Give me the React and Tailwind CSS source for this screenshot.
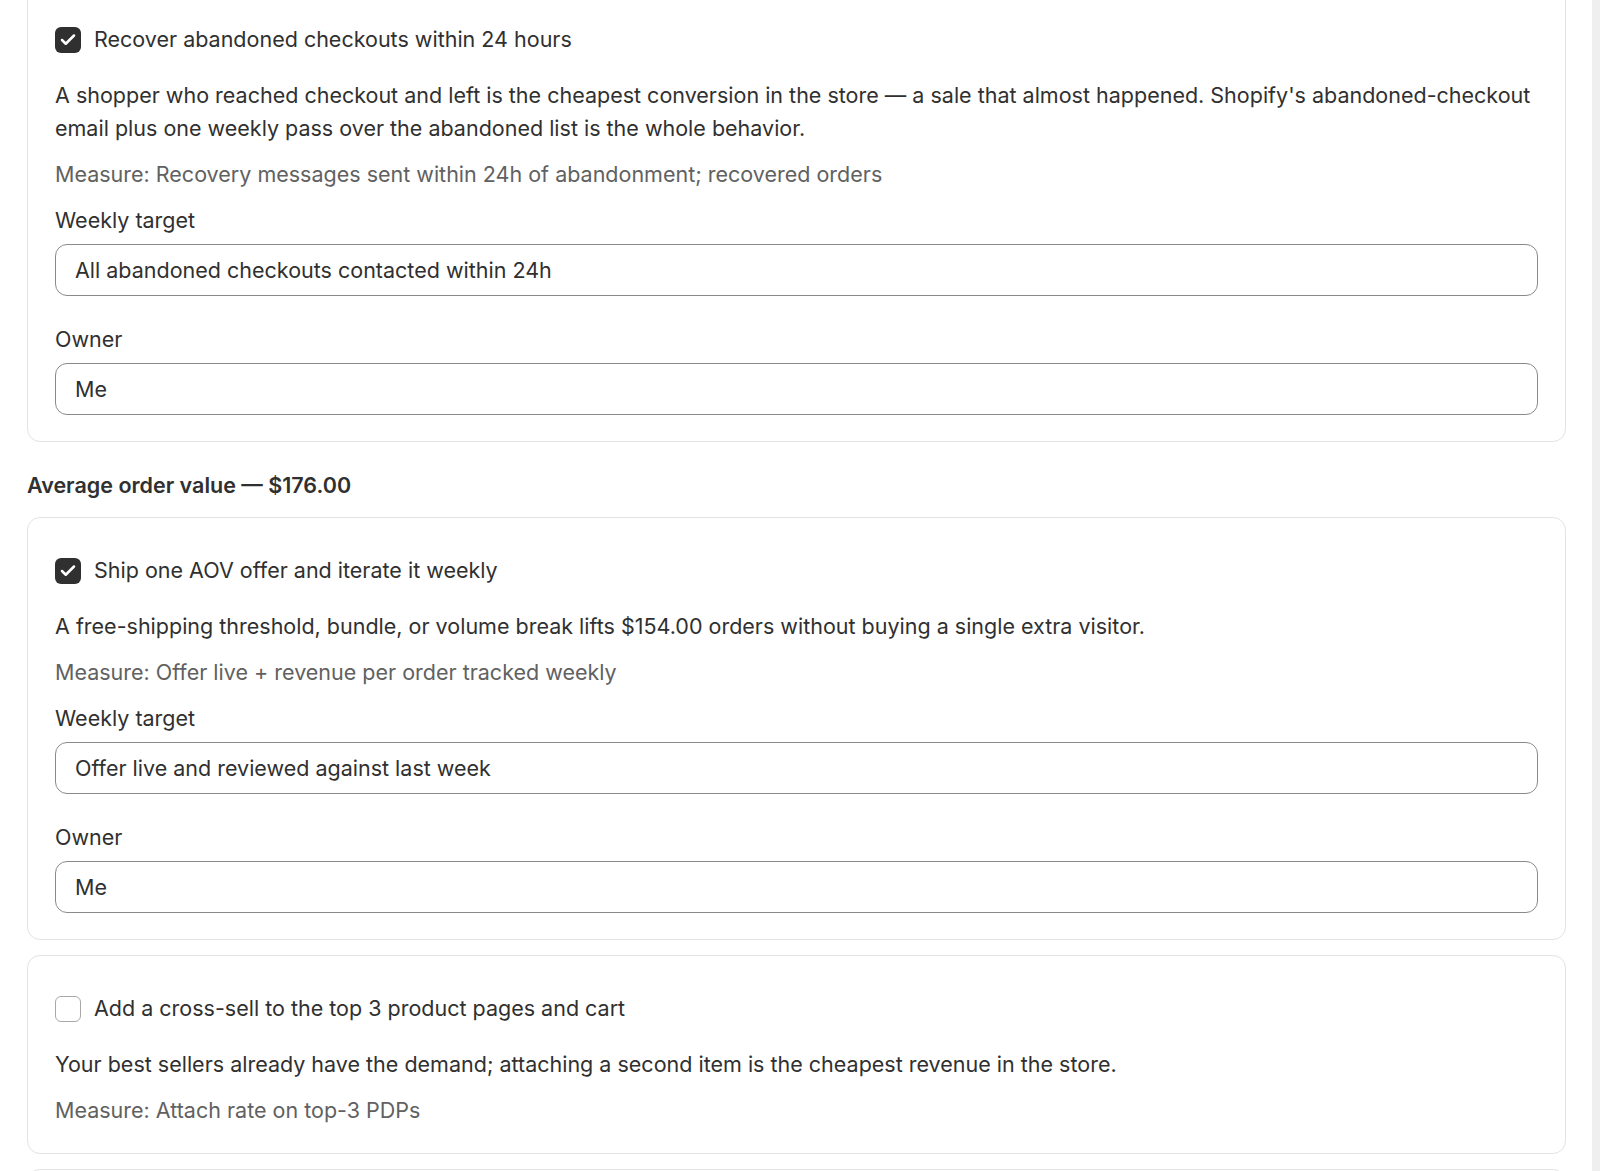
import { Check } from 'lucide-react'

const sections = [
  {
    heading: null,
    items: [
      {
        checked: true,
        title: 'Recover abandoned checkouts within 24 hours',
        body: "A shopper who reached checkout and left is the cheapest conversion in the store — a sale that almost happened. Shopify's abandoned-checkout email plus one weekly pass over the abandoned list is the whole behavior.",
        measure: 'Measure: Recovery messages sent within 24h of abandonment; recovered orders',
        target: 'All abandoned checkouts contacted within 24h',
        owner: 'Me'
      }
    ]
  },
  {
    heading: 'Average order value — $176.00',
    items: [
      {
        checked: true,
        title: 'Ship one AOV offer and iterate it weekly',
        body: 'A free-shipping threshold, bundle, or volume break lifts $154.00 orders without buying a single extra visitor.',
        measure: 'Measure: Offer live + revenue per order tracked weekly',
        target: 'Offer live and reviewed against last week',
        owner: 'Me'
      },
      {
        checked: false,
        title: 'Add a cross-sell to the top 3 product pages and cart',
        body: 'Your best sellers already have the demand; attaching a second item is the cheapest revenue in the store.',
        measure: 'Measure: Attach rate on top-3 PDPs'
      },
      { placeholder: true }
    ]
  }
]

function Field({ label, value, first }) {
  return (
    <div className={first ? 'mt-[13px]' : 'mt-[27px]'}>
      <div className="leading-[33px]">{label}</div>
      <input
        readOnly
        value={value}
        className="mt-[7px] block h-[52px] w-full rounded-[12px] border border-[#8a8a8a] bg-white px-[19px] text-[21.5px] text-[#303030] outline-none"
      />
    </div>
  )
}

function PlanCard({ item }) {
  if (item.placeholder) {
    return <div className="mt-[15px] h-[60px] rounded-[13px] border border-[#e3e3e3]" />
  }

  return (
    <div className="mt-[15px] rounded-[13px] border border-[#e3e3e3] bg-white px-[27px] pb-[26px] pt-[36px] first:mt-0">
      <label className="flex items-center gap-[13px] leading-[33px]">
        {item.checked ? (
          <span className="flex h-[26px] w-[26px] items-center justify-center rounded-[6px] bg-[#303030] text-white">
            <Check size={18} strokeWidth={3.4} />
          </span>
        ) : (
          <span className="h-[26px] w-[26px] rounded-[6px] border border-[#a8a8a8] bg-white" />
        )}
        <span>{item.title}</span>
      </label>
      <p className="mt-[23px] leading-[33px]">{item.body}</p>
      <p className="mt-[13px] leading-[33px] text-[#616161]">{item.measure}</p>
      {item.target && (
        <>
          <Field label="Weekly target" value={item.target} first />
          <Field label="Owner" value={item.owner} />
        </>
      )}
    </div>
  )
}

export default function App() {
  return (
    <div className="flex h-[1171px] overflow-hidden bg-white font-['Inter',sans-serif] text-[21.5px] text-[#303030]">
      <main className="-mt-[14px] flex-1 pl-[27px] pr-[26px]">
        {sections.map((section, i) => (
          <section key={i}>
            {section.heading && (
              <h2 className="mb-[12px] mt-[27px] text-[21.5px] font-semibold leading-[33px]">
                {section.heading}
              </h2>
            )}
            {section.items.map((item, j) => (
              <PlanCard key={j} item={item} />
            ))}
          </section>
        ))}
      </main>
      <aside className="w-[8px] bg-[#efefef]" />
    </div>
  )
}
